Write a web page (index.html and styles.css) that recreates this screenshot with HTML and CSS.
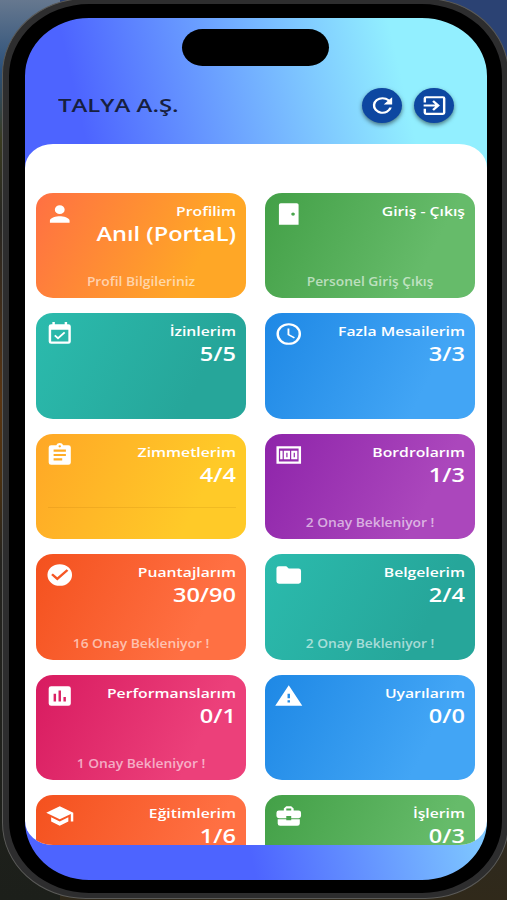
FILE: index.html
```
<!DOCTYPE html>
<html lang="tr">
<head>
    <meta charset="UTF-8">
    <meta name="viewport" content="width=device-width, initial-scale=1.0">
    <title>Talya A.Ş.</title>
    <link rel="stylesheet" href="styles.css">
</head>
<body>
    <div class="phone">
        <div class="screen">
            <div class="notch"></div>
            <header class="header">
                <h1>TALYA A.Ş.</h1>
                <div class="header-actions">
                    <button class="round-button" aria-label="Yenile">
                        <svg viewBox="0 0 24 24" preserveAspectRatio="none"><path d="M17.65 6.35A7.96 7.96 0 0 0 12 4a8 8 0 1 0 7.73 10h-2.08A6 6 0 1 1 12 6c1.66 0 3.14.69 4.22 1.78L13 11h7V4z"/></svg>
                    </button>
                    <button class="round-button" aria-label="Çıkış">
                        <svg viewBox="0 0 24 24" preserveAspectRatio="none"><path d="M10.09 15.59 11.5 17l5-5-5-5-1.41 1.41L12.67 11H3v2h9.67zM19 3H5a2 2 0 0 0-2 2v4h2V5h14v14H5v-4H3v4a2 2 0 0 0 2 2h14a2 2 0 0 0 2-2V5a2 2 0 0 0-2-2z"/></svg>
                    </button>
                </div>
            </header>

            <main class="content">
                <div class="card orange">
                    <svg class="card-icon" viewBox="0 0 24 24" preserveAspectRatio="none"><path d="M12 12a4 4 0 1 0 0-8 4 4 0 0 0 0 8zm0 2c-2.67 0-8 1.34-8 4v2h16v-2c0-2.66-5.33-4-8-4z"/></svg>
                    <h2>Profilim</h2>
                    <p class="value">Anıl (PortaL)</p>
                    <p class="note">Profil Bilgileriniz</p>
                </div>
                <div class="card green">
                    <svg class="card-icon" viewBox="0 0 24 24" preserveAspectRatio="none"><path fill-rule="evenodd" d="M5.500 2h13A1.500 1.500 0 0 1 20 3.500V22H4V3.500A1.500 1.500 0 0 1 5.500 2zm10 8.500a1.500 1.500 0 1 0 0 3 1.500 1.500 0 0 0 0-3z"/></svg>
                    <h2>Giriş - Çıkış</h2>
                    <p class="note">Personel Giriş Çıkış</p>
                </div>
                <div class="card teal">
                    <svg class="card-icon" viewBox="0 0 24 24" preserveAspectRatio="none"><path d="M16.530 11.060 15.470 10l-4.880 4.880-2.120-2.120-1.060 1.060L10.590 17zM19 3h-1V1h-2v2H8V1H6v2H5a2 2 0 0 0-2 2v14a2 2 0 0 0 2 2h14a2 2 0 0 0 2-2V5a2 2 0 0 0-2-2zm0 16H5V8h14z"/></svg>
                    <h2>İzinlerim</h2>
                    <p class="value">5/5</p>
                </div>
                <div class="card blue">
                    <svg class="card-icon" viewBox="0 0 24 24" preserveAspectRatio="none"><path d="M12 2a10 10 0 1 0 0 20 10 10 0 0 0 0-20zm0 18a8 8 0 1 1 0-16 8 8 0 0 1 0 16zm.5-13H11v6l5.250 3.150.75-1.230-4.500-2.670z"/></svg>
                    <h2>Fazla Mesailerim</h2>
                    <p class="value">3/3</p>
                </div>
                <div class="card yellow lined">
                    <svg class="card-icon" viewBox="0 0 24 24" preserveAspectRatio="none"><path d="M19 3h-4.180a3 3 0 0 0-5.640 0H5a2 2 0 0 0-2 2v14a2 2 0 0 0 2 2h14a2 2 0 0 0 2-2V5a2 2 0 0 0-2-2zm-7 0a1 1 0 1 1 0 2 1 1 0 0 1 0-2zm2 14H7v-2h7zm3-4H7v-2h10zm0-4H7V7h10z"/></svg>
                    <h2>Zimmetlerim</h2>
                    <p class="value">4/4</p>
                </div>
                <div class="card purple">
                    <svg class="card-icon" viewBox="0 0 24 24" preserveAspectRatio="none"><path fill-rule="evenodd" d="M2 4h20v16H2zm2 2v12h16V6zM5 8h2v8H5zm3 0h5v8H8zm2 2v4h1v-4zm4-2h5v8h-5zm2 2v4h1v-4z"/></svg>
                    <h2>Bordrolarım</h2>
                    <p class="value">1/3</p>
                    <p class="note">2 Onay Bekleniyor !</p>
                </div>
                <div class="card deep-orange">
                    <svg class="card-icon" viewBox="0 0 24 24" preserveAspectRatio="none"><path d="M12 2a10 10 0 1 0 0 20 10 10 0 0 0 0-20zm-2 15-5-5 1.410-1.410L10 14.170l7.590-7.590L19 8z"/></svg>
                    <h2>Puantajlarım</h2>
                    <p class="value">30/90</p>
                    <p class="note">16 Onay Bekleniyor !</p>
                </div>
                <div class="card teal">
                    <svg class="card-icon" viewBox="0 0 24 24" preserveAspectRatio="none"><path d="M10 4H4a2 2 0 0 0-2 2v12a2 2 0 0 0 2 2h16a2 2 0 0 0 2-2V8a2 2 0 0 0-2-2h-8z"/></svg>
                    <h2>Belgelerim</h2>
                    <p class="value">2/4</p>
                    <p class="note">2 Onay Bekleniyor !</p>
                </div>
                <div class="card pink">
                    <svg class="card-icon" viewBox="0 0 24 24" preserveAspectRatio="none"><path d="M19 3H5a2 2 0 0 0-2 2v14a2 2 0 0 0 2 2h14a2 2 0 0 0 2-2V5a2 2 0 0 0-2-2zM9 17H7v-7h2zm4 0h-2V7h2zm4 0h-2v-4h2z"/></svg>
                    <h2>Performanslarım</h2>
                    <p class="value">0/1</p>
                    <p class="note">1 Onay Bekleniyor !</p>
                </div>
                <div class="card blue">
                    <svg class="card-icon" viewBox="0 0 24 24" preserveAspectRatio="none"><path d="M1 21h22L12 2zm12-3h-2v-2h2zm0-4h-2v-4h2z"/></svg>
                    <h2>Uyarılarım</h2>
                    <p class="value">0/0</p>
                </div>
                <div class="card deep-orange">
                    <svg class="card-icon" viewBox="0 0 24 24" preserveAspectRatio="none"><path d="M5 13.180v4L12 21l7-3.820v-4L12 17zM12 3 1 9l11 6 9-4.910V17h2V9z"/></svg>
                    <h2>Eğitimlerim</h2>
                    <p class="value">1/6</p>
                </div>
                <div class="card green">
                    <svg class="card-icon" viewBox="0 0 24 24" preserveAspectRatio="none"><path d="M10 16v-1H3.010L3 19a2 2 0 0 0 2 2h14a2 2 0 0 0 2-2v-4h-7v1zm10-9h-4.010V5l-2-2h-4l-2 2v2H4a2 2 0 0 0-2 2v3a2 2 0 0 0 2 2h6v-2h4v2h6a2 2 0 0 0 2-2V9a2 2 0 0 0-2-2zm-6 0h-4V5h4z"/></svg>
                    <h2>İşlerim</h2>
                    <p class="value">0/3</p>
                </div>
            </main>
        </div>
    </div>
</body>
</html>
```
FILE: styles.css
```
* {
    box-sizing: border-box;
    margin: 0;
    padding: 0;
    font-family: 'Open Sans', 'Noto Sans', sans-serif;
}

body {
    width: 507px;
    height: 900px;
    overflow: hidden;
    background:
        linear-gradient(#66788f, #2c5079 70px, #3a3b20 140px, #262522 220px, #5a3512 400px, #4a3010 480px, #24231f 560px, #1c1f1a) left / 60px 100% no-repeat,
        linear-gradient(#2b4273, #2b4273 60px, #2a2a28 200px, #2a2a28 700px, #30291a);
}

.phone {
    width: 507px;
    height: 901px;
    margin: -2px 0 0 2px;
    padding: 5px 6px;
    background: #2d2d2e;
    border: 1px solid #5a5a58;
    border-radius: 84px / 76px;
}

.screen {
    width: 493px;
    height: 889px;
    border: solid #000;
    border-width: 14px 15px 13px 16px;
    border-radius: 80px / 72px;
    background: linear-gradient(77deg, #4d64ff 35%, #92efff 85%);
    overflow: hidden;
}

.notch {
    width: 147px;
    height: 37px;
    margin: 11px 0 0 157px;
    background: #000;
    border-radius: 21px / 19px;
}

.header {
    height: 78px;
    padding: 0 33px;
    display: flex;
    align-items: center;
    justify-content: space-between;
}

.header h1 {
    font-size: 18px;
    font-weight: 600;
    color: #17203f;
    transform: scaleX(1.33);
    transform-origin: left;
}

.header-actions {
    display: flex;
    gap: 12px;
}

.round-button {
    width: 40px;
    height: 35px;
    display: flex;
    align-items: center;
    justify-content: center;
    background: #0d47a1;
    border: none;
    border-radius: 50%;
    box-shadow: 0 2px 4px rgba(0, 0, 0, 0.5);
}

.round-button svg {
    width: 29px;
    height: 25px;
    flex-shrink: 0;
    fill: #fff;
}

.content {
    height: 701px;
    padding: 48.5px 12px 0 11.4px;
    display: grid;
    grid-template-columns: 210px 210px;
    grid-auto-rows: 105.5px;
    justify-content: space-between;
    row-gap: 15px;
    background: #fff;
    border-radius: 28px / 24px;
    overflow: hidden;
}

.card {
    position: relative;
    padding: 8px 10px 8px 9px;
    border-radius: 17px / 15px;
    color: #fff;
}

.card-icon {
    width: 29.5px;
    height: 26px;
    float: left;
    fill: #fff;
}

.lined::after {
    content: '';
    position: absolute;
    left: 12px;
    right: 10px;
    top: 73px;
    height: 1px;
    background: rgba(160, 100, 0, 0.15);
}

.card h2 {
    font-size: 13px;
    line-height: 20px;
    font-weight: 600;
    text-align: right;
    transform: scaleX(1.21);
    transform-origin: right;
}

.value {
    font-size: 19px;
    line-height: 26px;
    font-weight: 600;
    text-align: right;
    transform: scaleX(1.24);
    transform-origin: right;
}

.note {
    position: absolute;
    left: 0;
    right: 0;
    bottom: 7px;
    font-size: 12px;
    line-height: 18px;
    font-weight: 600;
    text-align: center;
    color: rgba(255, 255, 255, 0.6);
    transform: scaleX(1.15);
}

.orange { background: linear-gradient(117deg, #ff7043, #ffa726 75%); }
.green { background: linear-gradient(117deg, #43a047, #66bb6a 75%); }
.teal { background: linear-gradient(117deg, #2bbbad, #26a69a 75%); }
.blue { background: linear-gradient(117deg, #1e88e5, #42a5f5 75%); }
.yellow { background: linear-gradient(117deg, #ffa726, #ffca28 75%); }
.purple { background: linear-gradient(117deg, #8e24aa, #ab47bc 75%); }
.deep-orange { background: linear-gradient(117deg, #f4511e, #ff7043 75%); }
.pink { background: linear-gradient(117deg, #d81b60, #ec407a 75%); }
```
